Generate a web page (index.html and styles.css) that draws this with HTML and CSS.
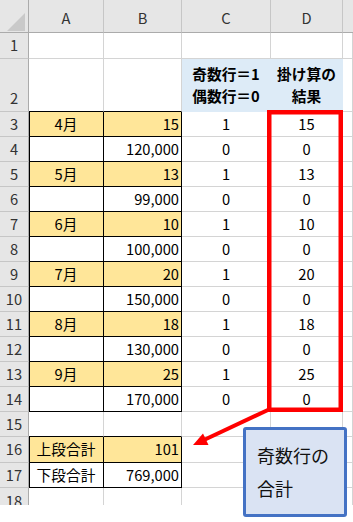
FILE: index.html
```html
<!DOCTYPE html>
<html lang="ja">
<head>
<meta charset="utf-8">
<link rel="stylesheet" href="styles.css">
</head>
<body>
<div class="page">
  <div class="sheet">
    <div class="c hd corner"><svg width="18" height="18" viewBox="0 0 18 18"><polygon points="18,0 18,18 0,18" fill="#c9c9c9"/></svg></div>
    <div class="c hd">A</div><div class="c hd">B</div><div class="c hd">C</div><div class="c hd">D</div><div class="c hd last"></div>

    <div class="c rh">1</div><div class="c"></div><div class="c"></div><div class="c"></div><div class="c"></div><div class="c"></div>

    <div class="c rh bottom">2</div><div class="c kb"></div><div class="c kb"></div>
    <div class="c ctr blue two">奇数行＝1<br>偶数行＝0</div><div class="c ctr blue two">掛け算の<br>結果</div><div class="c"></div>

    <div class="c rh">3</div><div class="c k ka y ctr">4月</div><div class="c k y rt">15</div><div class="c ctr">1</div><div class="c ctr">15</div><div class="c"></div>
    <div class="c rh">4</div><div class="c k ka"></div><div class="c k rt">120,000</div><div class="c ctr">0</div><div class="c ctr">0</div><div class="c"></div>
    <div class="c rh">5</div><div class="c k ka y ctr">5月</div><div class="c k y rt">13</div><div class="c ctr">1</div><div class="c ctr">13</div><div class="c"></div>
    <div class="c rh">6</div><div class="c k ka"></div><div class="c k rt">99,000</div><div class="c ctr">0</div><div class="c ctr">0</div><div class="c"></div>
    <div class="c rh">7</div><div class="c k ka y ctr">6月</div><div class="c k y rt">10</div><div class="c ctr">1</div><div class="c ctr">10</div><div class="c"></div>
    <div class="c rh">8</div><div class="c k ka"></div><div class="c k rt">100,000</div><div class="c ctr">0</div><div class="c ctr">0</div><div class="c"></div>
    <div class="c rh">9</div><div class="c k ka y ctr">7月</div><div class="c k y rt">20</div><div class="c ctr">1</div><div class="c ctr">20</div><div class="c"></div>
    <div class="c rh">10</div><div class="c k ka"></div><div class="c k rt">150,000</div><div class="c ctr">0</div><div class="c ctr">0</div><div class="c"></div>
    <div class="c rh">11</div><div class="c k ka y ctr">8月</div><div class="c k y rt">18</div><div class="c ctr">1</div><div class="c ctr">18</div><div class="c"></div>
    <div class="c rh">12</div><div class="c k ka"></div><div class="c k rt">130,000</div><div class="c ctr">0</div><div class="c ctr">0</div><div class="c"></div>
    <div class="c rh">13</div><div class="c k ka y ctr">9月</div><div class="c k y rt">25</div><div class="c ctr">1</div><div class="c ctr">25</div><div class="c"></div>
    <div class="c rh">14</div><div class="c k ka"></div><div class="c k rt">170,000</div><div class="c ctr">0</div><div class="c ctr">0</div><div class="c"></div>

    <div class="c rh">15</div><div class="c kb"></div><div class="c kb"></div><div class="c"></div><div class="c"></div><div class="c"></div>
    <div class="c rh">16</div><div class="c k ka y ctr">上段合計</div><div class="c k y rt">101</div><div class="c"></div><div class="c"></div><div class="c"></div>
    <div class="c rh">17</div><div class="c k ka ctr">下段合計</div><div class="c k rt">769,000</div><div class="c"></div><div class="c"></div><div class="c"></div>

    <div class="c rh cut"><span>18</span></div><div class="c cut"></div><div class="c cut"></div><div class="c cut"></div><div class="c cut"></div><div class="c cut"></div>
  </div>

  <svg class="overlay" width="353" height="522" viewBox="0 0 353 522">
    <rect x="269.25" y="112.25" width="71.5" height="297.5" fill="none" stroke="#ff0000" stroke-width="4.5"/>
    <line x1="270" y1="409" x2="205" y2="439.5" stroke="#ff0000" stroke-width="4"/>
    <polygon points="193,445 203,433.5 208.5,445" fill="#ff0000"/>
  </svg>

  <div class="callout">奇数行の<br>合計</div>
</div>
</body>
</html>
```

FILE: styles.css
```css
html, body {
  margin: 0;
  padding: 0;
  background: #ffffff;
}

.page {
  position: relative;
  width: 353px;
  height: 522px;
  overflow: hidden;
  font-family: "Noto Sans CJK JP", "Noto Sans", sans-serif;
  font-size: 14.7px;
  color: #000;
}

.sheet {
  display: grid;
  grid-template-columns: 29px 75px 78px 89px 72px 10px;
  grid-template-rows: 33px 26px 53px repeat(12, 25px) 25px 26px 25px 17px;
}

.c {
  box-sizing: border-box;
  display: flex;
  align-items: center;
  border-right: 1px solid #d4d4d4;
  border-bottom: 1px solid #d4d4d4;
  line-height: 1;
  white-space: nowrap;
}

.hd {
  background: #e6e6e6;
  justify-content: center;
  align-items: flex-end;
  padding-bottom: 6px;
  border-right-color: #c6c6c6;
  border-bottom-color: #ababab;
  color: #333;
}

.hd.last {
  border-right: none;
}

.corner {
  justify-content: flex-end;
  padding: 0 3px 1px 0;
  border-right-color: #ababab;
}

.corner svg {
  display: block;
}

.rh {
  background: #e6e6e6;
  justify-content: center;
  border-right-color: #ababab;
  border-bottom-color: #c6c6c6;
  color: #333;
}

.rh.bottom {
  align-items: flex-end;
  padding-bottom: 5px;
}

.ctr {
  justify-content: center;
}

.rt {
  justify-content: flex-end;
  padding-right: 2px;
}

.y {
  background: #ffe699;
}

.k {
  border-right-color: #000;
  border-bottom-color: #000;
}

.ka {
  box-shadow: inset 1px 0 0 #000;
}

.kb {
  border-bottom-color: #000;
}

.blue {
  background: #ddebf7;
  border-right-color: #ddebf7;
  border-bottom-color: #ddebf7;
}

.two {
  font-weight: 700;
  line-height: 22px;
  text-align: center;
}

.cut {
  overflow: hidden;
  align-items: flex-start;
  border-bottom: none;
}

.cut span {
  line-height: 25px;
}

.overlay {
  position: absolute;
  left: 0;
  top: 0;
  pointer-events: none;
}

.callout {
  position: absolute;
  left: 243px;
  top: 427px;
  width: 104px;
  height: 90px;
  box-sizing: border-box;
  border: 3px solid #4472c4;
  border-radius: 3px;
  background: #dae3f3;
  padding: 9px 0 0 11px;
  font-size: 18px;
  line-height: 33px;
  color: #111;
}
```
